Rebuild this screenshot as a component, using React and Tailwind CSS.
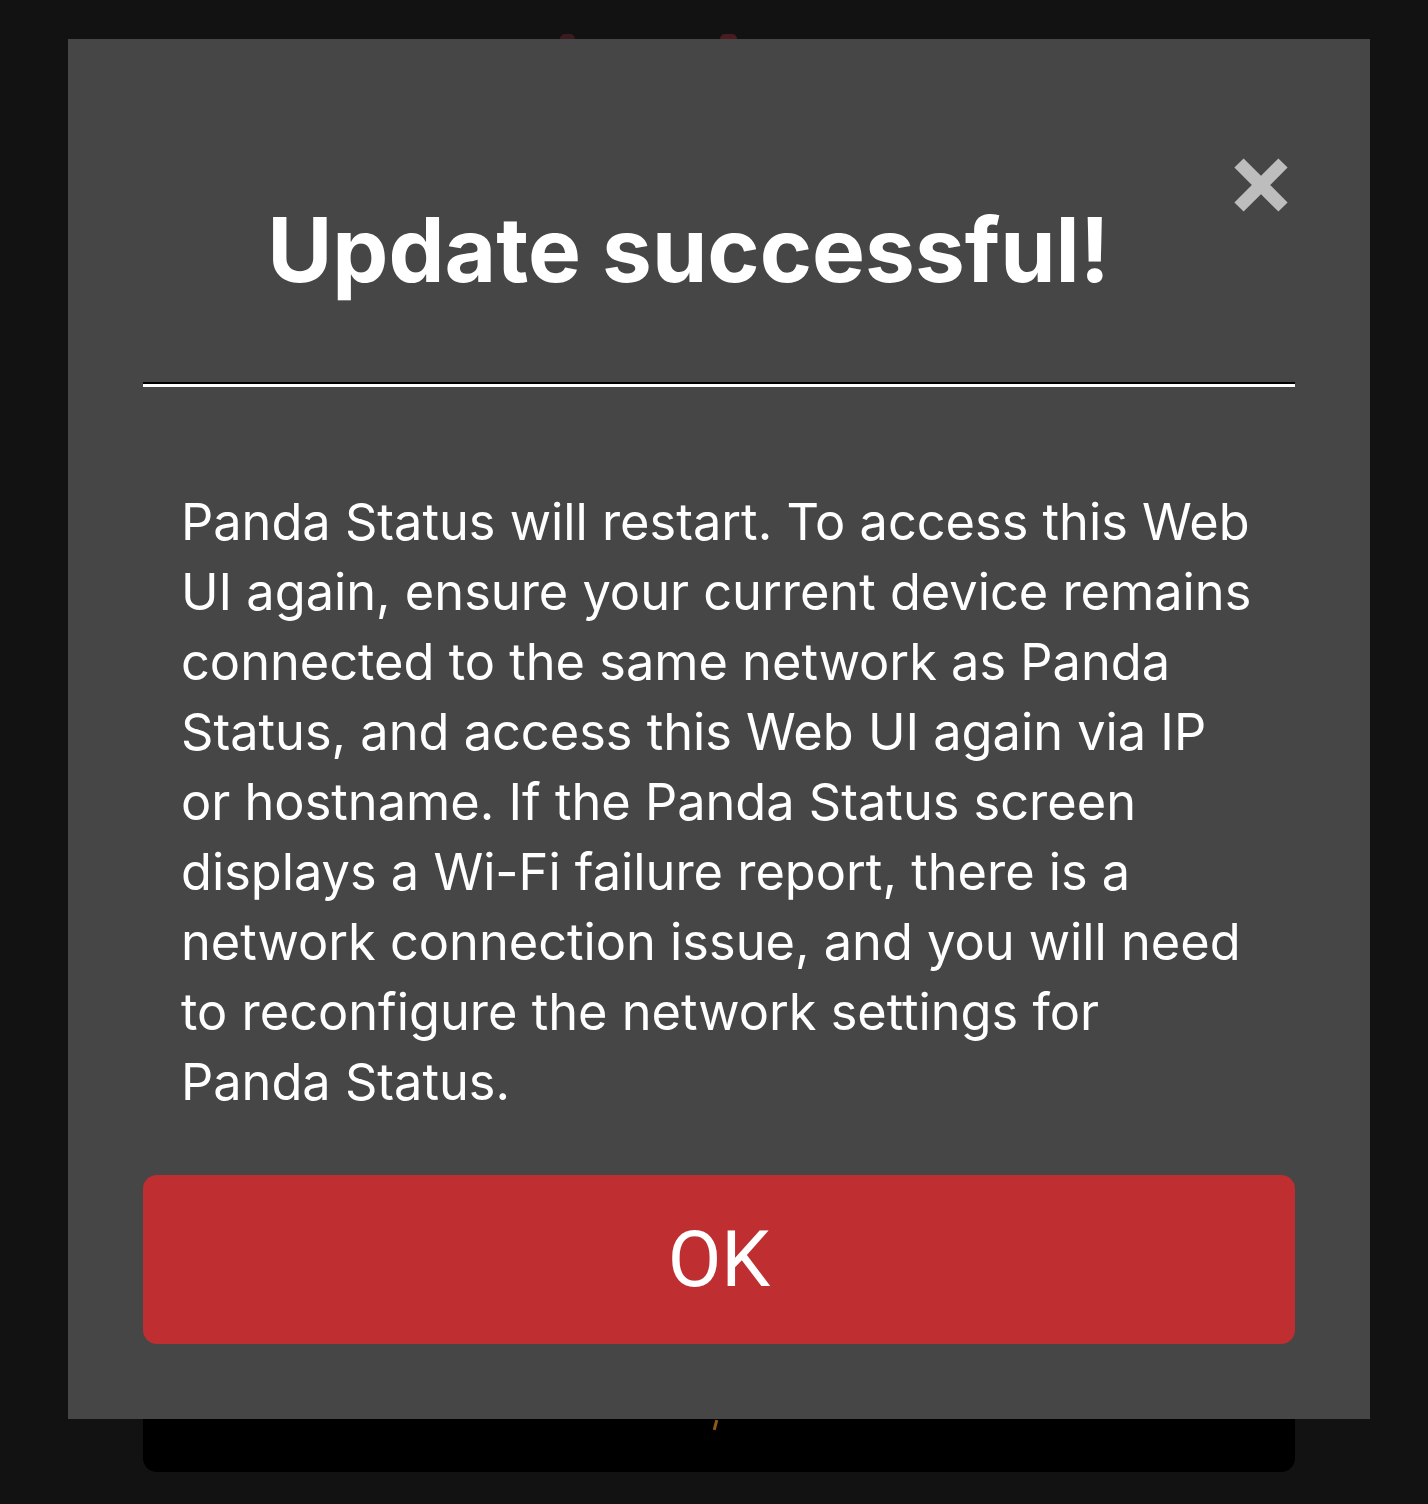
export default function App() {
    return (
        <div className="relative min-h-[1504px] w-full bg-[#121212] font-['Inter',sans-serif]">
            {/* page behind the dialog */}
            <div className="flex flex-col pl-[143px] pr-[133px]">
                <div className="flex h-[39px] items-end gap-[145px] pl-[417px]">
                    <span className="h-[5px] w-[15px] rounded-t-full bg-[#3b1c1e]" />
                    <span className="h-[5px] w-[17px] rounded-t-full bg-[#4a1c1f]" />
                </div>
                <div className="relative mt-[1161px] h-[272px] rounded-[14px] bg-black">
                    <div className="absolute left-[571px] top-[220px] h-[10px] w-[3px] rotate-[15deg] bg-[#8f5a17]" />
                </div>
            </div>

            {/* dialog */}
            <div className="absolute left-[68px] top-[39px] flex h-[1380px] w-[1302px] flex-col bg-[#464646] px-[75px]">
                <div className="flex items-start pt-[119px]">
                    <h1 className="mt-[39px] flex-1 text-center text-[89px] font-bold leading-[1.2] text-white">
                        Update successful!
                    </h1>
                    <button className="mr-[7px] flex h-[54px] w-[54px] shrink-0 items-center justify-center">
                        <svg width="54" height="54" viewBox="0 0 54 54">
                            <path d="M5 5 L49 49 M49 5 L5 49" stroke="#bdbdbd" strokeWidth="13" />
                        </svg>
                    </button>
                </div>

                <hr className="mt-[78px] h-0 border-0 border-t-2 border-b-[3px] border-t-black border-b-white" />

                <p className="mt-[100px] px-[38px] text-[50.5px] leading-[70px] text-white">
                    Panda Status will restart. To access this Web UI again, ensure your current device remains connected to the same network as Panda Status, and access this Web UI again via IP or hostname. If the Panda Status screen displays a Wi-Fi failure report, there is a network connection issue, and you will need to reconfigure the network settings for Panda Status.
                </p>

                <button className="mt-auto mb-[75px] flex h-[169px] w-full items-center justify-center rounded-[14px] bg-[#bf2e30] font-['Roboto',sans-serif] text-[78px] text-white">
                    OK
                </button>
            </div>
        </div>
    );
}
